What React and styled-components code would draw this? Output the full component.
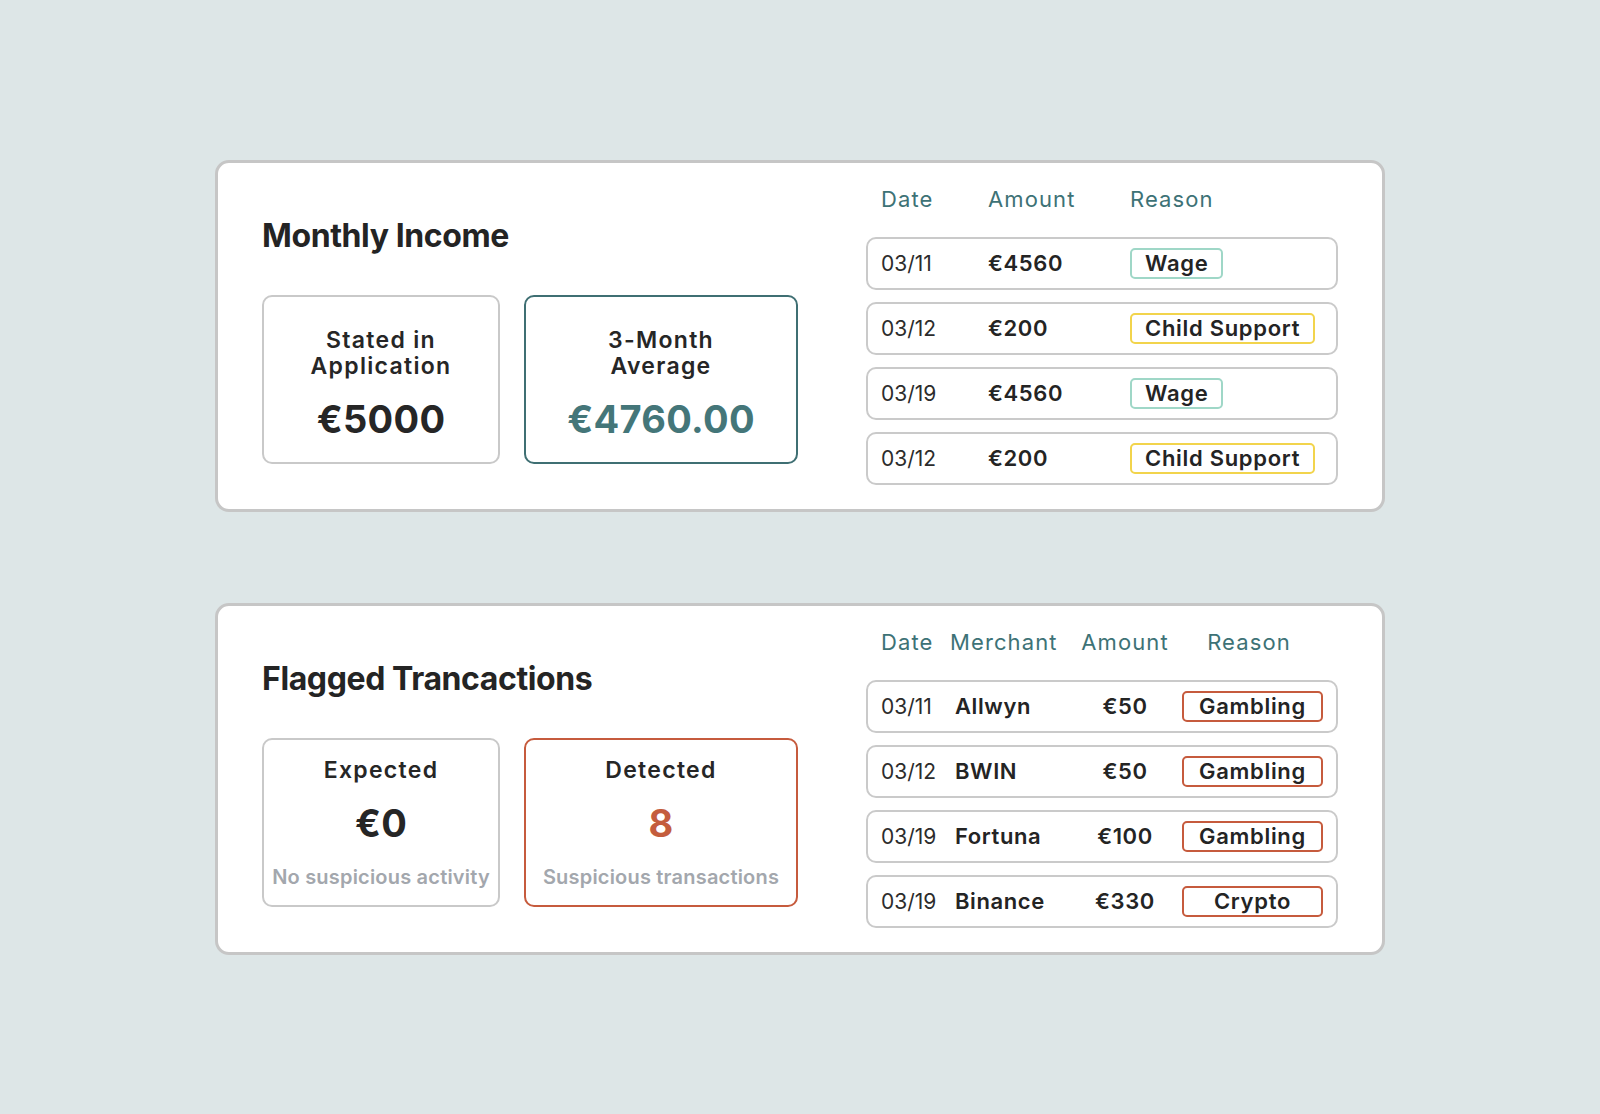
import React from 'react';
import styled, { createGlobalStyle } from 'styled-components';

const incomeRows = [
  { date: '03/11', amount: '€4560', reason: 'Wage', tone: 'mint' },
  { date: '03/12', amount: '€200', reason: 'Child Support', tone: 'yellow' },
  { date: '03/19', amount: '€4560', reason: 'Wage', tone: 'mint' },
  { date: '03/12', amount: '€200', reason: 'Child Support', tone: 'yellow' },
];

const flaggedRows = [
  { date: '03/11', merchant: 'Allwyn', amount: '€50', reason: 'Gambling' },
  { date: '03/12', merchant: 'BWIN', amount: '€50', reason: 'Gambling' },
  { date: '03/19', merchant: 'Fortuna', amount: '€100', reason: 'Gambling' },
  { date: '03/19', merchant: 'Binance', amount: '€330', reason: 'Crypto' },
];

const tones = {
  mint: '#9fd7c7',
  yellow: '#f2d44c',
  rust: '#c65b3d',
};

const App = () => {
  return (
    <>
      <GlobalStyle />
      <Page>
        <Card>
          <Summary>
            <Title>Monthly Income</Title>
            <Stats>
              <StatBox $w={238} $gap={20} $top={6}>
                <StatLabel>Stated in<br />Application</StatLabel>
                <StatValue>€5000</StatValue>
              </StatBox>
              <StatBox $w={274} $gap={20} $top={6} $accent="#3f6f73">
                <StatLabel>3-Month<br />Average</StatLabel>
                <StatValue $color="#447679">€4760.00</StatValue>
              </StatBox>
            </Stats>
          </Summary>
          <Table>
            <HeadRow $cols="107px 142px 1fr">
              <span>Date</span>
              <span>Amount</span>
              <span>Reason</span>
            </HeadRow>
            {incomeRows.map((r, i) => (
              <Row key={i} $cols="107px 142px 1fr">
                <DateCell>{r.date}</DateCell>
                <Strong>{r.amount}</Strong>
                <Tag $border={tones[r.tone]}>{r.reason}</Tag>
              </Row>
            ))}
          </Table>
        </Card>

        <Card>
          <Summary>
            <Title>Flagged Trancactions</Title>
            <Stats>
              <StatBox $w={238} $gap={20} $top={0}>
                <StatLabel>Expected</StatLabel>
                <StatValue>€0</StatValue>
                <StatNote>No suspicious activity</StatNote>
              </StatBox>
              <StatBox $w={274} $gap={20} $top={0} $accent={tones.rust}>
                <StatLabel>Detected</StatLabel>
                <StatValue $color="#c45d3d">8</StatValue>
                <StatNote>Suspicious transactions</StatNote>
              </StatBox>
            </Stats>
          </Summary>
          <Table>
            <HeadRow $cols="69px 125px 100px 1fr">
              <span>Date</span>
              <span>Merchant</span>
              <Center>Amount</Center>
              <Center>Reason</Center>
            </HeadRow>
            {flaggedRows.map((r, i) => (
              <Row key={i} $cols="74px 120px 100px 1fr">
                <DateCell>{r.date}</DateCell>
                <Strong>{r.merchant}</Strong>
                <Strong $center>{r.amount}</Strong>
                <Tag $border={tones.rust} $fixed>{r.reason}</Tag>
              </Row>
            ))}
          </Table>
        </Card>
      </Page>
    </>
  );
};

export default App;

const GlobalStyle = createGlobalStyle`
  body {
    margin: 0;
    background: #dde6e7;
    font-family: Inter, "Open Sans", sans-serif;
    color: #252525;
  }
`;

const Page = styled.div`
  min-height: 1114px;
  display: flex;
  flex-direction: column;
  align-items: center;
  justify-content: center;
  gap: 91px;
`;

const Card = styled.section`
  box-sizing: border-box;
  width: 1170px;
  height: 352px;
  background: #fff;
  border: 3px solid #c6c6c6;
  border-radius: 14px;
  padding: 0 44px;
  display: flex;
  align-items: center;
  justify-content: space-between;
`;

const Summary = styled.div`
  display: flex;
  flex-direction: column;
  margin-top: 9px;
`;

const Title = styled.h2`
  margin: 0 0 39px;
  font-size: 32px;
  line-height: 40px;
  font-weight: 700;
  letter-spacing: -0.4px;
  color: #242424;
`;

const Stats = styled.div`
  display: flex;
  gap: 24px;
`;

const StatBox = styled.div`
  box-sizing: border-box;
  width: ${p => p.$w}px;
  height: 169px;
  padding-top: ${p => p.$top || 0}px;
  border: 2px solid ${p => p.$accent || '#c9c9c9'};
  border-radius: 10px;
  display: flex;
  flex-direction: column;
  align-items: center;
  justify-content: center;
  gap: ${p => p.$gap}px;
  text-align: center;
`;

const StatLabel = styled.div`
  font-size: 23px;
  line-height: 26px;
  font-weight: 600;
  letter-spacing: 1.3px;
  color: #262626;
`;

const StatValue = styled.div`
  font-size: 38px;
  line-height: 40px;
  font-weight: 700;
  letter-spacing: 0.3px;
  color: ${p => p.$color || '#262626'};
`;

const StatNote = styled.div`
  margin-top: 2px;
  font-size: 20px;
  line-height: 24px;
  font-weight: 600;
  letter-spacing: 0.2px;
  color: #a3a7ad;
  white-space: nowrap;
`;

const Table = styled.div`
  width: 472px;
  display: flex;
  flex-direction: column;
  gap: 12px;
`;

const HeadRow = styled.div`
  display: grid;
  grid-template-columns: ${p => p.$cols};
  padding: 0 15px;
  margin-bottom: 14px;
  font-size: 22px;
  line-height: 24px;
  letter-spacing: 1.1px;
  color: #3d7276;
`;

const Center = styled.span`
  text-align: center;
`;

const Row = styled.div`
  box-sizing: border-box;
  height: 53px;
  border: 2px solid #cacaca;
  border-radius: 10px;
  padding: 0 13px;
  display: grid;
  grid-template-columns: ${p => p.$cols};
  align-items: center;
  font-size: 22px;
`;

const DateCell = styled.span`
  font-size: 21px;
  font-weight: 400;
  color: #2c2c2c;
`;

const Strong = styled.span`
  font-weight: 600;
  letter-spacing: 0.6px;
  color: #242424;
  text-align: ${p => (p.$center ? 'center' : 'left')};
`;

const Tag = styled.span`
  box-sizing: border-box;
  justify-self: ${p => (p.$fixed ? 'end' : 'start')};
  width: ${p => (p.$fixed ? '141px' : 'auto')};
  height: 31px;
  padding: 0 13px;
  border: 2px solid ${p => p.$border};
  border-radius: 5px;
  display: flex;
  align-items: center;
  justify-content: center;
  font-weight: 600;
  letter-spacing: 0.7px;
  color: #242424;
`;
